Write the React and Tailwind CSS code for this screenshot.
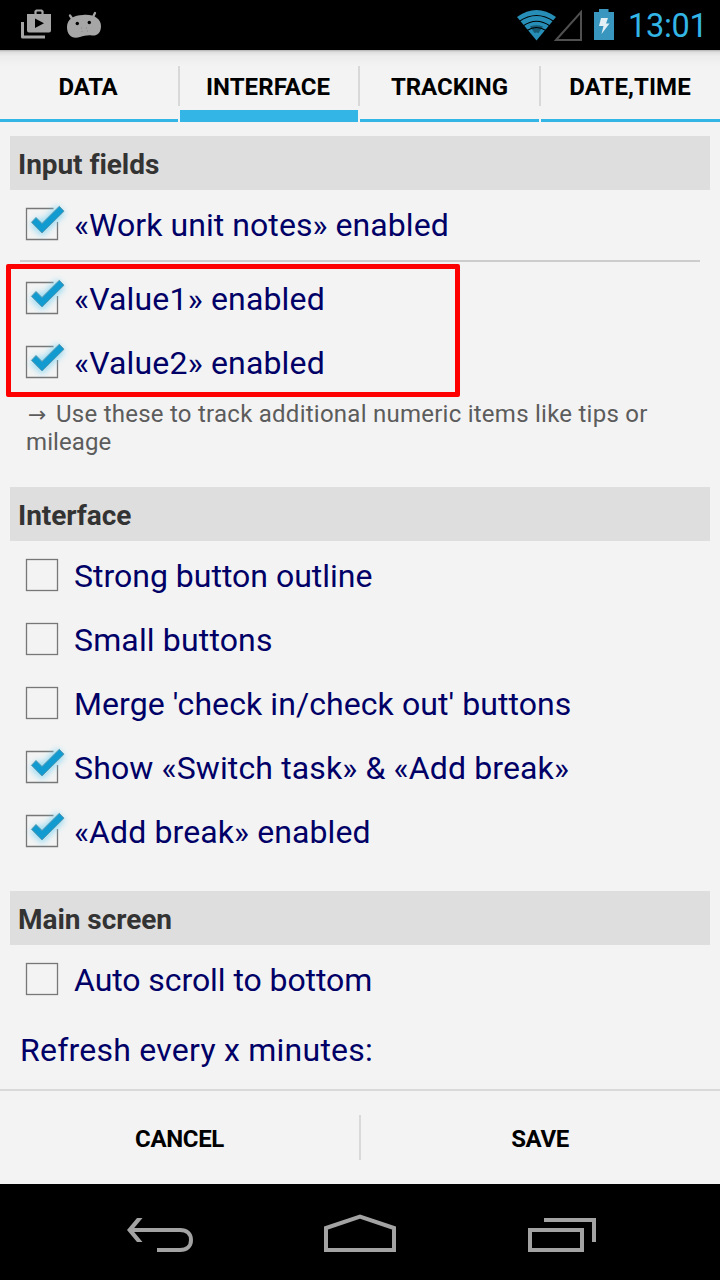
import React from "react";

function StatusBar() {
  return (
    <header className="flex h-[50px] shrink-0 items-center bg-black">
      <svg className="h-[50px] w-[120px]" viewBox="0 0 120 50" fill="none">
        <path d="M22.5 22V37H45" stroke="#a6a6a6" strokeWidth="3" strokeLinejoin="round" />
        <path d="M35.500 14V11.500L36.500 10.500H41.500L42.500 11.500V14" stroke="#a6a6a6" strokeWidth="2.200" />
        <path fillRule="evenodd" fill="#a6a6a6" d="M27 14H51V30.500Q51 32.500 49 32.500H29Q27 32.500 27 30.500ZM35 18.500V28L44 23.300Z" />
        <path d="M70 15.500L73 20M95 13L92.500 18" stroke="#a6a6a6" strokeWidth="2.300" strokeLinecap="round" />
        <path fill="#a6a6a6" d="M67 27C67 19 74 15 83 15C94 14 101 19 101 26C101 33 97 36 92 35.500C87 35 84 36 80 37C72 39.500 67 35 67 27Z" />
        <circle cx="77.300" cy="23.500" r="1.700" fill="#000" />
        <circle cx="89.300" cy="22.500" r="1.700" fill="#000" />
        <path d="M81 28h1M86 28h1M81.500 31.500h1M87 31h1" stroke="#888" strokeWidth="1" />
      </svg>
      <svg className="ml-auto h-[50px] w-[110px]" viewBox="510 0 110 50" fill="none">
        <path fill="#278fb7" d="M517 17Q536.500 3 556 17L536.500 40.500Z" />
        <path fill="#165a74" d="M530 26.500Q536.500 24 543 26.500L538.500 33Q536.500 32 534.500 33Z" />
        <path d="M519 21.500Q536.500 9.500 554 21.500M523 26Q536.500 16.500 550 26M527 30.500Q536.500 24.500 546 30.500" stroke="#000" strokeWidth="1.200" />
        <path d="M556 40L581 12V40Z" stroke="#505050" strokeWidth="2" />
        <path fill="#3997bf" d="M594 12H599V9H608.500V12H614V40H594Z" />
        <path fill="#e2f0f6" d="M601 18H608L606 23.500H609.500L601.500 34L603.500 26H599Z" />
      </svg>
      <span className="w-[100px] pt-px pl-[8px] text-[32.5px] leading-[50px] tracking-[-0.3px] text-[#33b5e5]">13:01</span>
    </header>
  );
}

function Tab({ active, className, children }) {
  return (
    <button className={`flex items-end justify-center font-bold ${className} ${active ? "border-b-[12px]" : "border-b-[3px]"} border-[#33b5e5]`}>
      <span className={`text-[24px] leading-[28px] ${active ? "pb-[9px]" : "pb-[18px]"}`}>{children}</span>
    </button>
  );
}

function TabDivider() {
  return <div className="mt-4 h-10 w-[2px] shrink-0 bg-[#d8d8d8]" />;
}

function SectionTitle({ children }) {
  return <h2 className="mx-[10px] h-[54px] bg-[#dedede] pl-[8px] text-[28px] leading-[57px] font-bold tracking-[-0.05px] text-[#333]">{children}</h2>;
}

function Option({ checked = false, className = "tracking-[0.1px]", children }) {
  return (
    <label className="flex h-16 items-center">
      <svg className="h-16 w-[74px] shrink-0" viewBox="0 0 74 64" fill="none">
        {checked ? (
          <>
            <path d="M53.500 16.500H26.500V47.500H57.500V30" stroke="#777" strokeWidth="1.300" />
            <path d="M34 29L42 36.500L61 17.500" stroke="#63cdf2" strokeWidth="11" opacity="0.65" className="blur-[3px]" />
            <path d="M31.500 30.300L36 25.500L42 31.500L59.300 14.300L64 19.200L42 40.900Z" fill="#129bd0" stroke="#5799b0" strokeWidth="1" />
          </>
        ) : (
          <rect x="26.500" y="16.500" width="31" height="31" stroke="#777" strokeWidth="1.300" />
        )}
      </svg>
      <span className={`pt-[2px] text-[32px] leading-[38px] whitespace-nowrap text-[#000066] ${className}`}>{children}</span>
    </label>
  );
}

export default function App() {
  return (
    <div className="flex h-[1280px] w-[720px] flex-col overflow-hidden bg-[#f3f3f3] font-['Roboto',sans-serif]">
      <StatusBar />
      <nav className="flex h-[72px] shrink-0 bg-[linear-gradient(#b0b0b0_0px,#dedede_2px,#ececec_6px,#f3f3f3_16px)] text-black">
        <Tab className="w-[178px] pr-[2px] tracking-[-0.2px]">DATA</Tab>
        <TabDivider />
        <Tab active className="w-[178px] pr-[2px] tracking-[0.08px]">INTERFACE</Tab>
        <TabDivider />
        <Tab className="w-[179px] tracking-[-0.05px]">TRACKING</Tab>
        <TabDivider />
        <Tab className="w-[179px] pr-px tracking-[0.1px]">DATE,TIME</Tab>
      </nav>
      <main className="flex h-[967px] shrink-0 flex-col pt-[14px]">
        <SectionTitle>Input fields</SectionTitle>
        <div className="pt-[2px]">
          <Option checked className="tracking-[0.06px]">«Work unit notes» enabled</Option>
        </div>
        <hr className="mx-5 mt-1 border-t-2 border-[#ccc]" />
        <div className="relative pt-1">
          <Option checked className="tracking-[0.17px]">«Value1» enabled</Option>
          <Option checked className="tracking-[0.17px]">«Value2» enabled</Option>
          <div className="absolute top-[2px] left-[6px] h-[133px] w-[454px] rounded-[2px] border-[5px] border-[#ff0000]" />
        </div>
        <p className="mt-[6px] h-[56px] pl-[26px] text-[24px] leading-[28px] tracking-[0.25px] text-[#5c5c5c]">
          <span className="inline-block w-[30px] pl-[2px] font-['DejaVu_Sans',sans-serif] text-[22px] leading-[20px]">→</span>Use these to track additional numeric items like tips or<br />
          <span className="tracking-[0.1px]">mileage</span>
        </p>
        <div className="mt-[31px]">
          <SectionTitle>Interface</SectionTitle>
          <div className="pt-[2px]">
            <Option className="tracking-normal">Strong button outline</Option>
            <Option className="tracking-[0.15px]">Small buttons</Option>
            <Option className="tracking-[0.08px]">Merge 'check in/check out' buttons</Option>
            <Option checked className="tracking-[0.13px]">Show «Switch task» &amp; «Add break»</Option>
            <Option checked>«Add break» enabled</Option>
          </div>
        </div>
        <div className="mt-[28px]">
          <SectionTitle>Main screen</SectionTitle>
          <div className="pt-[2px]">
            <Option className="tracking-[-0.07px]">Auto scroll to bottom</Option>
          </div>
        </div>
        <p className="mt-[20px] pl-5 text-[32px] leading-[38px] tracking-[0.24px] text-[#000066]">Refresh every x minutes:</p>
      </main>
      <footer className="flex h-[95px] shrink-0 items-center border-t-2 border-[#d9d9d9] text-[24px] font-bold tracking-[-0.35px] text-black">
        <button className="w-[359px] pt-[3px]">CANCEL</button>
        <div className="h-[45px] w-[2px] bg-[#d9d9d9]" />
        <button className="w-[359px] pt-[3px] pr-px">SAVE</button>
      </footer>
      <svg className="h-24 w-[720px] shrink-0 bg-black" viewBox="0 1184 720 96" fill="none" stroke="#a3a3a3" strokeWidth="4">
        <path d="M130 1230H180C187 1230 191 1234 191 1240S187 1250 180 1250H157" />
        <path d="M137 1218H142.500L132.500 1230L142.500 1242H137L127 1230Z" fill="#a3a3a3" stroke="none" />
        <path d="M326 1250V1228L360 1216.500L394 1228V1250Z" />
        <path d="M544 1220H594V1242M530 1230H582V1250H530Z" />
      </svg>
    </div>
  );
}
